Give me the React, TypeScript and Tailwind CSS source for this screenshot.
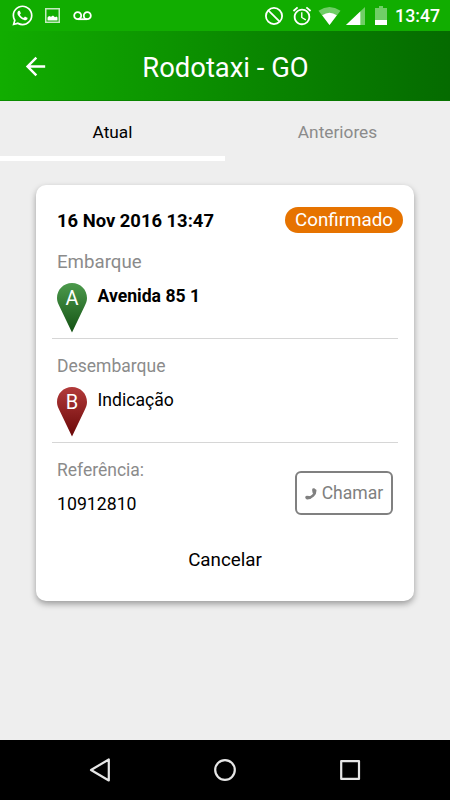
import { ReactNode } from "react";
import { FaWhatsapp } from "react-icons/fa";
import { MdAlarm, MdArrowBack } from "react-icons/md";

const StatusBar = () => (
  <div className="flex h-[31px] items-center bg-[#11ad00] pl-3 pr-[10px] text-white">
    <FaWhatsapp className="h-[23px] w-[21px]" />
    <svg className="ml-3 h-[15px] w-[15px]" viewBox="0 0 15 15">
      <rect x="0.75" y="0.75" width="13.5" height="13.5" fill="none" stroke="#c4ebc0" strokeWidth="1.5" />
      <path d="M2.500 12.500v-3l1.500-1.500 2 .8 2-1.300 2 1.800 1.500-.8 1 1v3z" fill="#fff" />
    </svg>
    <svg className="ml-[13px] h-[10px] w-[19px]" viewBox="0 0 19 10" fill="none" stroke="#fff" strokeWidth="1.8">
      <circle cx="4.7" cy="4.7" r="3.5" />
      <circle cx="14.3" cy="4.7" r="3.5" />
      <path d="M4.7 8.2h9.6" />
    </svg>

    <svg className="ml-auto h-5 w-5" viewBox="0 0 20 20" fill="none" stroke="#fff" strokeWidth="1.8">
      <circle cx="10" cy="10" r="8.1" />
      <path d="M4.3 4.3l11.4 11.4" />
    </svg>
    <MdAlarm className="ml-[7px] h-[22px] w-[22px]" />
    <svg className="ml-[5px] h-[18px] w-[23px]" viewBox="0 0 23 18" fill="#fff">
      <path d="M0.5 3.7Q11.5-3.7 22.5 3.7L11.5 18z" opacity="0.4" />
      <path d="M4.2 8.2Q11.5 3.2 18.8 8.2L11.5 18z" />
    </svg>
    <svg className="ml-[5px] h-[18px] w-[19px]" viewBox="0 0 19 18" fill="#fff">
      <path d="M19 0v18H0z" opacity="0.4" />
      <path d="M14.3 4.4V18H0z" />
    </svg>
    <svg className="ml-[10px] h-[19px] w-3" viewBox="0 0 12 19" fill="#fff">
      <path d="M4 0h4v2h4v12H0V2h4z" opacity="0.4" />
      <path d="M0 14h12v5H0z" />
    </svg>
    <span className="ml-2 mt-px w-[45px] whitespace-nowrap text-right text-[17.7px] font-medium leading-[30px]">13:47</span>
  </div>
);

const Header = ({ title }: { title: string }) => (
  <header className="grid h-[70px] grid-cols-[70px_1fr_70px] items-center border-b border-[#087800]/60 bg-linear-to-r from-[#11ad00] to-[#056b00] text-white">
    <button className="ml-[21px] w-7 pt-px" aria-label="Voltar">
      <MdArrowBack className="h-[29px] w-[29px]" />
    </button>
    <h1 className="pl-px pt-1 text-center text-[27.4px] leading-8">{title}</h1>
  </header>
);

const Tabs = () => (
  <nav className="grid h-[60px] grid-cols-2 text-[17.3px]">
    <button className="border-b-[5px] border-white pt-[8px] text-black">Atual</button>
    <button className="border-b-[5px] border-transparent pt-[8px] text-[#8b8b8b]">Anteriores</button>
  </nav>
);

type PinProps = {
  id: string;
  letter: string;
  from: string;
  to: string;
};

const Pin = ({ id, letter, from, to }: PinProps) => (
  <svg className="h-[50px] w-[30px] shrink-0" viewBox="0 0 30 50">
    <defs>
      <linearGradient id={id} x1="0" y1="0" x2="0" y2="1">
        <stop offset="0" stopColor={from} />
        <stop offset="1" stopColor={to} />
      </linearGradient>
    </defs>
    <path d="M15 0C6.5 0 0 6.7 0 15c0 3 1 5.400 2.300 8L15 49.500 27.700 23C29 20.400 30 18 30 15 30 6.700 23.500 0 15 0z" fill={`url(#${id})`} />
    <text x="15" y="22" fill="#fff" fontSize="20" textAnchor="middle">
      {letter}
    </text>
  </svg>
);

const Stop = ({ label, pin, children }: { label: ReactNode; pin: ReactNode; children: ReactNode }) => (
  <section className="h-[104px] border-b border-[#d6d6d6] pl-[5px] pt-[15px]">
    <h2 className="text-[17.5px] leading-6 text-[#8b8b8b]">{label}</h2>
    <div className="mt-[9px] flex gap-[10.5px]">
      {pin}
      <p className="text-[17.6px] leading-[26px]">{children}</p>
    </div>
  </section>
);

const RideCard = () => (
  <main className="ml-9 mt-6 flex h-[416px] w-[378px] flex-col rounded-[10px] bg-white px-4 pt-[22px] shadow-[0_3px_6px_rgba(0,0,0,0.35)]">
    <div className="-mr-[5px] mb-[2px] flex h-[26px] items-center justify-between pl-[5px]">
      <span className="pt-px text-[18.4px] font-bold">16 Nov 2016 13:47</span>
      <span className="h-[26px] w-[118px] rounded-full bg-[#e67300] text-center text-[18.8px] leading-[27px] text-white">
        Confirmado
      </span>
    </div>
    <Stop
      label={<span className="text-[18.7px]">Embarque</span>}
      pin={<Pin id="pin-a" letter="A" from="#4c9a4c" to="#145214" />}
    >
      <b>Avenida 85 1</b>
    </Stop>
    <Stop label="Desembarque" pin={<Pin id="pin-b" letter="B" from="#b23a3a" to="#6b0808" />}>
      Indicação
    </Stop>
    <div className="flex justify-between pl-[5px] pr-[5px]">
      <div className="pt-[15px]">
        <h2 className="text-[17.5px] leading-6 text-[#8b8b8b]">Referência:</h2>
        <p className="mt-[10px] text-[17.7px] leading-6">10912810</p>
      </div>
      <button className="mt-7 flex h-11 w-[98px] items-center justify-center gap-[5px] rounded-md border-2 border-[#808080] pt-px text-[17.6px] text-[#808080]">
        <svg className="h-3 w-3" viewBox="0 0 12 12" stroke="currentColor" fill="none" strokeLinecap="round">
          <path d="M10.200 2.500C10.300 6.300 6.800 10 2.300 10.200" strokeWidth="2.600" />
          <path d="M8.700 1.900l.4 2.200M1.800 9.400l2.400.1" strokeWidth="3.200" />
        </svg>
        Chamar
      </button>
    </div>
    <button className="mt-8 self-center text-[18.8px] leading-6">Cancelar</button>
  </main>
);

const NavBar = () => (
  <footer className="flex h-[60px] items-center justify-between bg-black pl-[89px] pr-[89px]">
    <svg className="h-6 w-[22px]" viewBox="0 0 22 24" fill="none" stroke="#e6e6e6" strokeWidth="2.200" strokeLinejoin="round">
      <path d="M19.800 1.500v21L2 12z" />
    </svg>
    <svg className="h-6 w-6" viewBox="0 0 24 24" fill="none" stroke="#e6e6e6" strokeWidth="2.200">
      <circle cx="12" cy="12" r="9.800" />
    </svg>
    <svg className="h-6 w-[22px]" viewBox="0 0 22 24" fill="none" stroke="#e6e6e6" strokeWidth="2.200" strokeLinejoin="round">
      <rect x="2.200" y="3.100" width="17.800" height="17.800" />
    </svg>
  </footer>
);

export default function App() {
  return (
    <div className="flex h-[800px] w-[450px] flex-col overflow-hidden bg-[#eeeeee] font-[Roboto,sans-serif] text-black">
      <StatusBar />
      <Header title="Rodotaxi - GO" />
      <Tabs />
      <RideCard />
      <div className="grow" />
      <NavBar />
    </div>
  );
}
